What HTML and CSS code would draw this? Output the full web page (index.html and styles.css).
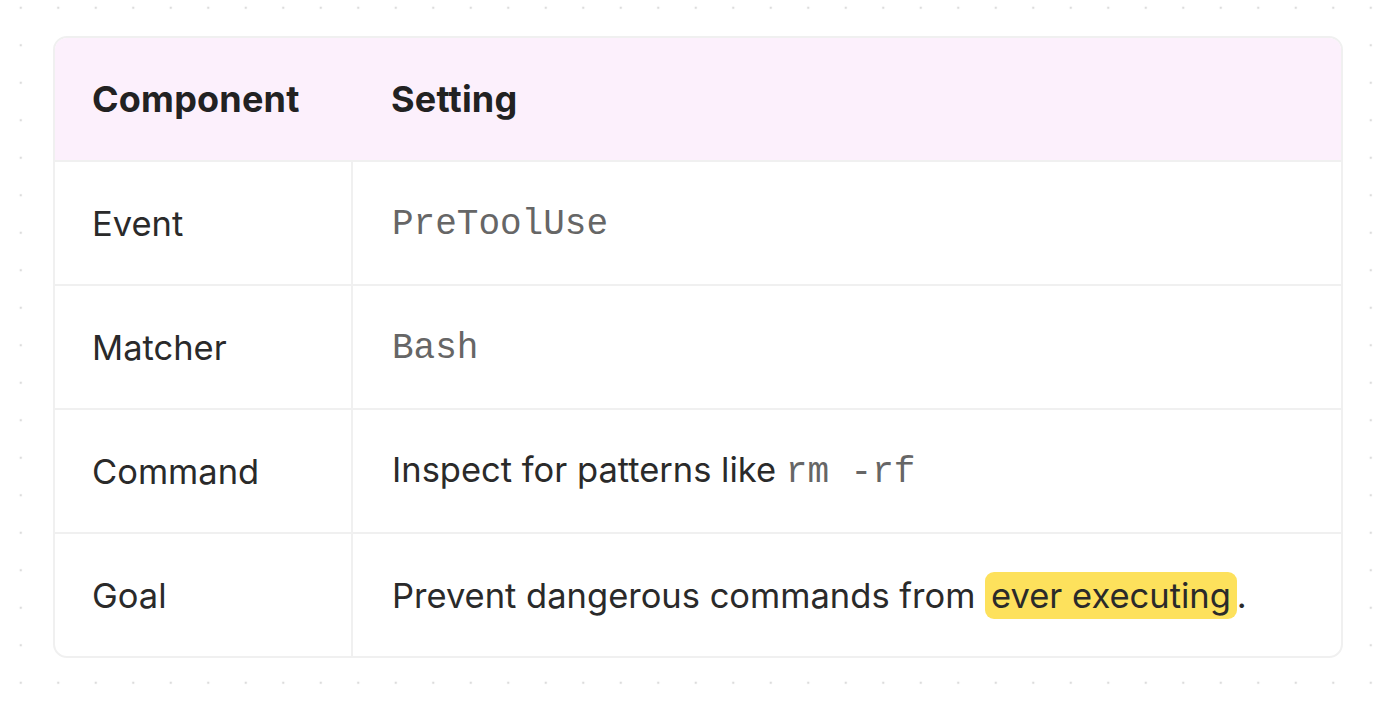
FILE: index.html
```html
<!DOCTYPE html>
<html lang="en">
<head>
  <meta charset="UTF-8" />
  <title>Hook Settings</title>
  <link rel="stylesheet" href="styles.css">
</head>
<body>
  <div class="board">
    <div class="card">
      <table class="settings">
        <thead>
          <tr>
            <th class="col-name">Component</th>
            <th>Setting</th>
          </tr>
        </thead>
        <tbody>
          <tr>
            <td>Event</td>
            <td><code>PreToolUse</code></td>
          </tr>
          <tr>
            <td>Matcher</td>
            <td><code>Bash</code></td>
          </tr>
          <tr>
            <td>Command</td>
            <td>Inspect for patterns like <code>rm -rf</code></td>
          </tr>
          <tr>
            <td>Goal</td>
            <td>Prevent dangerous commands from <span class="mark">ever executing</span>.</td>
          </tr>
        </tbody>
      </table>
    </div>
  </div>
</body>
</html>
```

FILE: styles.css
```css
body, html {
  margin: 0;
  padding: 0;
  height: 100%;
  overflow: hidden;
  font-family: Inter, "Noto Sans", sans-serif;
  color: #2a2a2a;
  background: #fff;
}
.board {
  height: 100%;
  box-sizing: border-box;
  padding: 36px 57px 0 53px;
  background-image: radial-gradient(circle, #dcdcdc 1.2px, transparent 1.6px);
  background-size: 37.5px 37.5px;
  background-position: 2px -11px;
}
.card {
  border: 2px solid #f0f0f0;
  border-radius: 14px;
  overflow: hidden;
  background: #fff;
}
.settings {
  width: 100%;
  border-collapse: collapse;
  font-size: 34.5px;
}
.settings th,
.settings td {
  height: 122px;
  padding: 0 0 0 37px;
  text-align: left;
  vertical-align: middle;
}
.settings th {
  background: #fcf0fc;
  font-weight: 700;
  font-size: 36px;
  color: #222;
  letter-spacing: 0.2px;
}
.settings th + th {
  padding-left: 39px;
}
.settings .col-name {
  width: 260px;
}
.settings td {
  border-top: 2px solid #f0f0f0;
  font-weight: 400;
}
.settings td + td {
  padding-left: 39px;
}
.settings td:first-child {
  border-right: 2px solid #f0f0f0;
}
code {
  font-family: "Liberation Mono", monospace;
  font-size: 36px;
  color: #666;
}
.mark {
  background: #fde15c;
  border-radius: 9px;
  padding: 3px 6px;
}
```
